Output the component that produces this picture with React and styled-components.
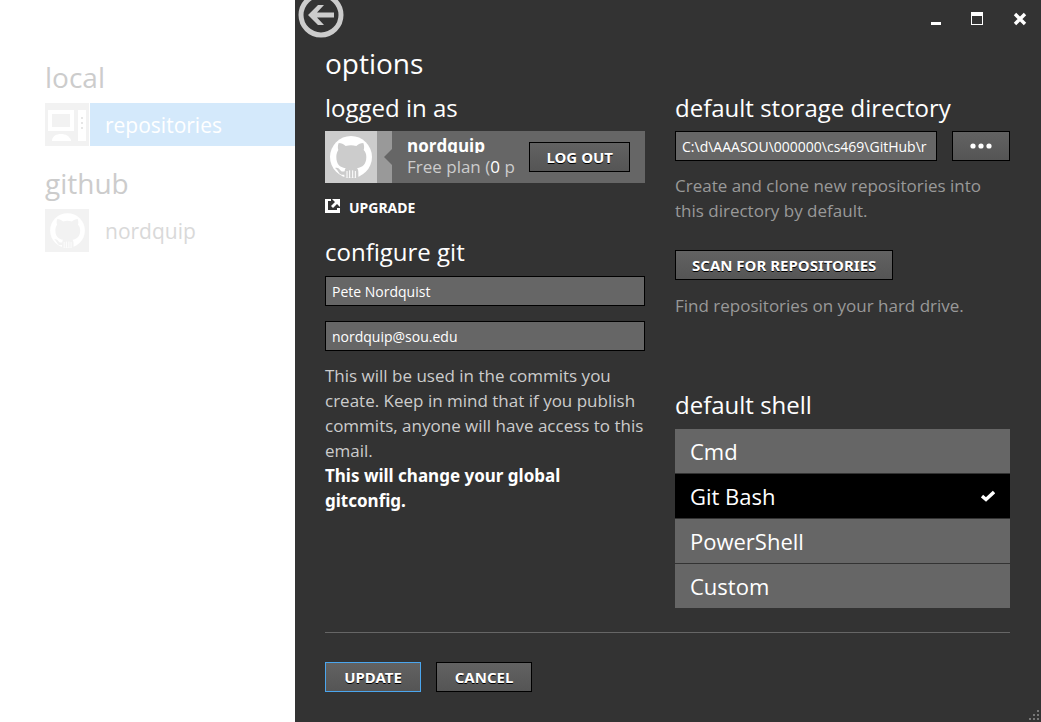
import React, { useState } from "react";
import styled, { createGlobalStyle, css } from "styled-components";

const GlobalStyle = createGlobalStyle`
  *, *::before, *::after { box-sizing: border-box; }
  body {
    margin: 0;
    background: #fff;
    font-family: "Open Sans", "Noto Sans", sans-serif;
  }
  button, input { font-family: inherit; }
  h1, h2, p, ul { margin: 0; padding: 0; font-weight: 400; }
`;

const boldFont = css`
  font-family: "Noto Sans", "Open Sans", sans-serif;
  font-weight: 700;
`;

const Window = styled.div`
  display: flex;
  min-height: 100vh;
`;

const Sidebar = styled.nav`
  flex: 0 0 295px;
  padding: 59px 0 0 45px;
`;

const SideTitle = styled.h2`
  font-size: 28px;
  line-height: 36px;
  color: #ccc;
`;

const SideLink = styled.a`
  display: flex;
  gap: 1px;
  height: 43px;
  margin: 8px 0 19px;
  text-decoration: none;
`;

const SideIcon = styled.span`
  display: flex;
  flex: 0 0 44px;
  align-items: center;
  justify-content: center;
  background: #f2f2f2;
`;

const SideLabel = styled.span`
  flex: 1;
  padding-left: 15px;
  font-size: 21px;
  line-height: 44px;
  color: ${(p) => (p.$active ? "#fff" : "#d9d9d9")};
  background: ${(p) => (p.$active ? "#d4e9fb" : "transparent")};
`;

const Panel = styled.main`
  position: relative;
  display: flex;
  flex: 1;
  flex-direction: column;
  min-width: 0;
  background: #333;
  color: #fff;
`;

const TitleBar = styled.header`
  display: flex;
  justify-content: space-between;
  height: 38px;
  padding-left: 3px;
`;

const IconButton = styled.button`
  display: flex;
  align-items: center;
  justify-content: center;
  width: 42px;
  height: 38px;
  padding: 0;
  border: 0;
  background: none;
  color: #fff;
`;

const BackButton = styled(IconButton)`
  width: 46px;
  height: 46px;
  margin-top: -8px;
`;

const WindowControls = styled.div`
  display: flex;
`;

const Content = styled.form`
  padding: 7px 31px 30px 30px;
`;

const PageTitle = styled.h1`
  margin-bottom: 9px;
  font-size: 28px;
  line-height: 36px;
`;

const Columns = styled.div`
  display: grid;
  grid-template-columns: minmax(0, 320fr) minmax(0, 335fr);
  gap: 30px;
`;

const Column = styled.div`
  display: flex;
  flex-direction: column;
  align-items: flex-start;
`;

const Heading = styled.h2`
  margin: ${(p) => p.$top || 0}px 0 ${(p) => p.$bottom || 5}px;
  font-size: 24px;
  line-height: 36px;
`;

const Account = styled.div`
  display: flex;
  align-items: center;
  width: 100%;
  height: 52px;
  padding-right: 15px;
  background: #666;
`;

const Avatar = styled.span`
  display: flex;
  flex: none;
  background: #ccc;
`;

const AccountText = styled.div`
  flex: 1;
  min-width: 0;
  height: 42px;
  margin: 0 12px 0 15px;
`;

const AccountName = styled.div`
  height: 17px;
  margin-bottom: 3px;
  overflow: hidden;
  font-size: 17px;
  font-weight: 700;
  line-height: 20px;
`;

const AccountPlan = styled.div`
  height: 22px;
  overflow: hidden;
  font-size: 17px;
  line-height: 22px;
  white-space: nowrap;
  color: #ccc;
`;

const White = styled.span`
  color: #fff;
`;

const Button = styled.button`
  ${boldFont}
  flex: none;
  min-width: 96px;
  height: 30px;
  padding: 0 16px;
  border: 1px solid ${(p) => (p.$primary ? "#4ba6ee" : "#000")};
  background: linear-gradient(#626262, #555);
  color: #fff;
  font-size: 15px;
  line-height: 28px;
  text-shadow: 0 1px 0 #000;
`;

const BrowseButton = styled(Button)`
  display: flex;
  align-items: center;
  justify-content: center;
  width: 58px;
  min-width: 0;
  padding: 0;
`;

const UpgradeLink = styled.a`
  ${boldFont}
  display: flex;
  align-items: center;
  gap: 9px;
  margin-top: 16px;
  color: #fff;
  font-size: 14px;
  line-height: 18px;
  text-decoration: none;
`;

const TextInput = styled.input`
  flex: 1;
  width: 100%;
  min-width: 0;
  height: 30px;
  min-height: 30px;
  padding: 0 6px;
  border: 1px solid #000;
  background: #666;
  color: #fff;
  font-size: 14px;
`;

const Fields = styled.div`
  display: flex;
  flex-direction: column;
  gap: 15px;
  width: 100%;
`;

const FieldRow = styled.div`
  display: flex;
  gap: 15px;
  width: 100%;
`;

const Note = styled.p`
  margin-top: ${(p) => p.$top || 12}px;
  font-size: 17px;
  line-height: 25px;
  color: ${(p) => (p.$dim ? "#999" : "#ccc")};
`;

const Warning = styled.strong`
  ${boldFont}
  display: block;
  color: #fff;
`;

const ScanButton = styled(Button)`
  margin-top: 27px;
`;

const ShellList = styled.div`
  display: flex;
  flex-direction: column;
  gap: 1px;
  width: 100%;
`;

const ShellOption = styled.label`
  display: flex;
  align-items: center;
  justify-content: space-between;
  height: 44px;
  padding: 0 15px;
  background: ${(p) => (p.$selected ? "#000" : "#666")};
  font-size: 22px;
  line-height: 42px;
`;

const HiddenRadio = styled.input`
  position: absolute;
  opacity: 0;
  pointer-events: none;
`;

const Footer = styled.footer`
  display: flex;
  gap: 15px;
  margin-top: 24px;
  padding-top: 29px;
  border-top: 1px solid #666;
`;

const Grip = styled.svg`
  position: absolute;
  right: 2px;
  bottom: 2px;
`;

function Octocat({ size, color }) {
  return (
    <svg width={size} height={size} viewBox="0 0 156 156" aria-hidden="true">
      <circle cx="78" cy="78" r="63" fill="#fff" />
      <path
        fill={color}
        d="M41 36C49 36 56 40 62 45Q78 41 94 45C100 40 107 36 115 36C118 44 118 51 116 57C122 63 124 70 124 78C124 99 113 109 96 112C99 115 100 119 100 124V140H58V131C44 134 42 125 37 118Q34 113 30 111C38 108 43 113 46 118C49 123 54 122 59 121C59 117 60 114 62 112C44 109 34 99 34 78C34 70 36 63 40 57C38 51 38 44 41 36Z"
      />
      <path stroke="#fff" strokeWidth="3" d="M66 120V141M74 118V141M83 118V141M91 120V141" />
    </svg>
  );
}

function Computer() {
  return (
    <svg width="44" height="43" viewBox="0 0 44 43" aria-hidden="true">
      <path fill="#fff" fillRule="evenodd" d="M3 7H29V28H3ZM7 11V24H25V11Z" />
      <path fill="#fff" d="M7 37C8 33 11 31 16 31S24 33 26 37V38H7Z" />
      <path fill="#fff" d="M33 7H41V38H33Z" />
      <path fill="#e6e6e6" d="M36 14h2v2h-2zM36 19h2v2h-2zM36 24h2v2h-2z" />
    </svg>
  );
}

const shells = ["Cmd", "Git Bash", "PowerShell", "Custom"];

export default function App() {
  const [shell, setShell] = useState("Git Bash");

  return (
    <>
      <GlobalStyle />
      <Window>
        <Sidebar>
          <SideTitle>local</SideTitle>
          <SideLink href="#repositories">
            <SideIcon>
              <Computer />
            </SideIcon>
            <SideLabel $active>repositories</SideLabel>
          </SideLink>
          <SideTitle>github</SideTitle>
          <SideLink href="#nordquip">
            <SideIcon>
              <Octocat size={43} color="#f2f2f2" />
            </SideIcon>
            <SideLabel>nordquip</SideLabel>
          </SideLink>
        </Sidebar>

        <Panel>
          <TitleBar>
            <BackButton type="button" aria-label="Back">
              <svg width="46" height="46" viewBox="0 0 46 46">
                <circle cx="23" cy="23" r="20" fill="none" stroke="#ccc" strokeWidth="5" />
                <path fill="#ccc" d="M10 23L20 13H26L19 20.500H36V25.500H19L26 33H20Z" />
              </svg>
            </BackButton>
            <WindowControls>
              <IconButton type="button" aria-label="Minimize">
                <svg width="14" height="14" viewBox="0 0 14 14">
                  <path fill="#fff" d="M2 10h10v3H2z" />
                </svg>
              </IconButton>
              <IconButton type="button" aria-label="Maximize">
                <svg width="14" height="14" viewBox="0 0 14 14">
                  <path fill="#fff" fillRule="evenodd" d="M0 0h12v13H0zM1 4v8h10V4z" />
                </svg>
              </IconButton>
              <IconButton type="button" aria-label="Close">
                <svg width="14" height="14" viewBox="0 0 14 14">
                  <path stroke="#fff" strokeWidth="3.400" d="M2 2L12 12M12 2L2 12" />
                </svg>
              </IconButton>
            </WindowControls>
          </TitleBar>

          <Content onSubmit={(e) => e.preventDefault()}>
            <PageTitle>options</PageTitle>
            <Columns>
              <Column>
                <Heading>logged in as</Heading>
                <Account>
                  <Avatar>
                    <Octocat size={52} color="#ccc" />
                  </Avatar>
                  <svg width="15" height="52" viewBox="0 0 15 52" aria-hidden="true">
                    <path fill="#999" d="M0 0H15V18L7 26L15 34V52H0Z" />
                  </svg>
                  <AccountText>
                    <AccountName>nordquip</AccountName>
                    <AccountPlan>
                      Free plan (<White>0</White> p
                    </AccountPlan>
                  </AccountText>
                  <Button type="button">LOG OUT</Button>
                </Account>
                <UpgradeLink href="#upgrade">
                  <svg width="15" height="18" viewBox="0 0 15 18" aria-hidden="true">
                    <path fill="#fff" d="M0 0H6V2H3V11H12V9H15V14H0Z" />
                    <path fill="#fff" d="M7 0H15V8L12 5L8 9L6 7L10 3Z" />
                  </svg>
                  UPGRADE
                </UpgradeLink>

                <Heading $top={17} $bottom={6}>
                  configure git
                </Heading>
                <Fields>
                  <TextInput aria-label="Name" defaultValue="Pete Nordquist" />
                  <TextInput type="email" aria-label="Email" defaultValue="nordquip@sou.edu" />
                </Fields>
                <Note>
                  This will be used in the commits you create. Keep in mind that if you publish
                  commits, anyone will have access to this email.
                  <Warning>This will change your global gitconfig.</Warning>
                </Note>
              </Column>

              <Column>
                <Heading>default storage directory</Heading>
                <FieldRow>
                  <TextInput
                    aria-label="Default storage directory"
                    defaultValue={"C:\\d\\AAASOU\\000000\\cs469\\GitHub\\r"}
                  />
                  <BrowseButton type="button" aria-label="Browse">
                    <svg width="22" height="8" viewBox="0 0 22 8">
                      <g fill="#fff">
                        <circle cx="3" cy="4" r="2.600" />
                        <circle cx="11" cy="4" r="2.600" />
                        <circle cx="19" cy="4" r="2.600" />
                      </g>
                    </svg>
                  </BrowseButton>
                </FieldRow>
                <Note $dim>Create and clone new repositories into this directory by default.</Note>
                <ScanButton type="button">SCAN FOR REPOSITORIES</ScanButton>
                <Note $dim $top={13}>Find repositories on your hard drive.</Note>

                <Heading $top={69} $bottom={6}>
                  default shell
                </Heading>
                <ShellList role="radiogroup" aria-label="default shell">
                  {shells.map((name) => (
                    <ShellOption key={name} $selected={shell === name}>
                      <HiddenRadio
                        type="radio"
                        name="shell"
                        checked={shell === name}
                        onChange={() => setShell(name)}
                      />
                      {name}
                      {shell === name && (
                        <svg width="14" height="12" viewBox="0 0 14 12" aria-hidden="true">
                          <path fill="none" stroke="#fff" strokeWidth="3.400" d="M1 6L5 9.500L13 2" />
                        </svg>
                      )}
                    </ShellOption>
                  ))}
                </ShellList>
              </Column>
            </Columns>

            <Footer>
              <Button type="submit" $primary>
                UPDATE
              </Button>
              <Button type="button">CANCEL</Button>
            </Footer>
          </Content>

          <Grip width="10" height="10" viewBox="0 0 10 10" aria-hidden="true">
            <path
              fill="#777"
              d="M8 0h2v2h-2zM4 4h2v2h-2zM8 4h2v2h-2zM0 8h2v2h-2zM4 8h2v2h-2zM8 8h2v2h-2z"
            />
          </Grip>
        </Panel>
      </Window>
    </>
  );
}
